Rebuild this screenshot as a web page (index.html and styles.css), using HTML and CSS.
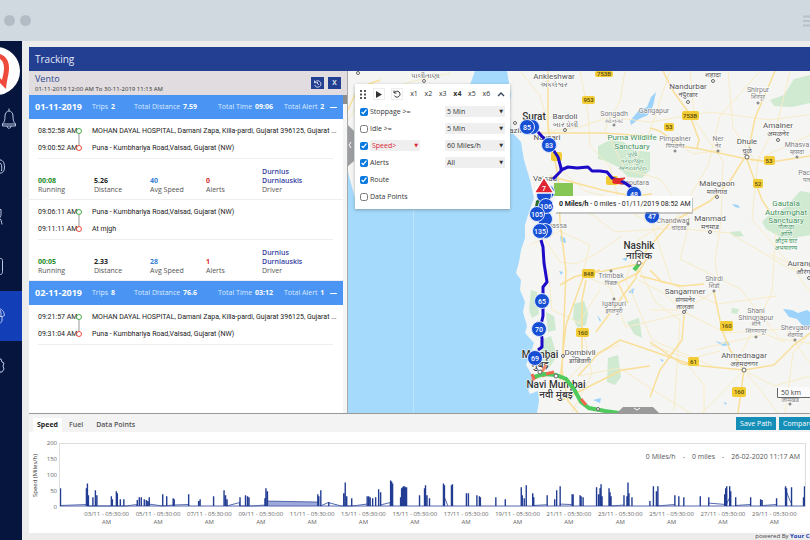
FILE: index.html
```html
<!DOCTYPE html>
<html lang="en">
<head>
<meta charset="utf-8">
<meta name="viewport" content="width=device-width, initial-scale=1">
<title>Tracking</title>
<link rel="stylesheet" href="styles.css">
</head>
<body>
<header class="browser-bar">
  <span class="dot"></span><span class="dot"></span>
  <svg class="menu-icon" width="7" height="12" viewBox="0 0 7 12" aria-hidden="true"><path d="M0 1.500h7M0 6h7M0 10.500h7"/></svg>
</header>
<div class="app">
  <nav class="sidebar" aria-label="Main">
    <a class="logo" href="#" aria-label="Home">
      <svg width="22" height="60" viewBox="0 0 22 60"><circle cx="-4" cy="30" r="24" fill="#fff"/><path d="M0 13C6 15 9 20 9 27c0 6-2 11-3 21L-2 40V35l4 4c1-5 2-8 2-12 0-5-2-8-4-9z" fill="#ef4b3c"/></svg>
    </a>
    <a class="nav-item" href="#" aria-label="Alerts"><svg viewBox="0 0 22 50"><path d="M2.500 33c2-2 2.500-4 2.500-8 0-3 2-5 4-5s4 2 4 5c0 4 .5 6 2.500 8zM9 20v-2.500M2.500 33v2h13v-2M7 35c0 3 4 3 4 0"/></svg></a>
    <a class="nav-item" href="#" aria-label="Vehicles"><svg viewBox="0 0 22 50"><path d="M-2 19C3 18 4.500 22 4.500 26c0 3-1 5-3 6h-3M0 22c2 1 2 4 1.500 8"/></svg></a>
    <a class="nav-item" href="#" aria-label="Drivers"><svg viewBox="0 0 22 50"><path d="M-2 18.500h3v5c0 2-1 3-2 4M-1 27c2 1 2.500 3 3 6.500"/></svg></a>
    <a class="nav-item" href="#" aria-label="Reports"><svg viewBox="0 0 22 50"><path d="M-2 17.500h2.500c1.500 0 2 1 2 2v11c0 2-1 3-2 3H-2"/></svg></a>
    <a class="nav-item active" href="#" aria-label="Tracking" aria-current="page"><svg viewBox="0 0 22 50"><path d="M-2 17.500c4 0 6 3 6.500 7l-2 1H-2M2 25v4c0 2-1 3-3 3M-1 18c2 1 2 4 2 7"/></svg></a>
    <a class="nav-item" href="#" aria-label="Settings"><svg viewBox="0 0 22 50"><path d="M-1 18h2l1 3 2 1-1 3 1 3-2 3-2 0-1 3"/></svg></a>
  </nav>
  <main class="content">
    <h1 class="title">Tracking</h1>
    <div class="workspace">
      <section class="trips">
        <div class="vehicle">
          <div>
            <h2>Vento</h2>
            <p>01-11-2019 12:00 AM To 30-11-2019 11:13 AM</p>
          </div>
          <button class="square" aria-label="History"><svg width="9" height="9" viewBox="0 0 12 12"><path d="M2 2v3h3M2.300 5A4.300 4.300 0 1 1 2.200 8M6 4v2.500l2 1"/></svg></button>
          <button class="square">X</button>
        </div>
        <div class="trip-scroll">
          <div class="trip-list">
            <div class="day"><strong>01-11-2019</strong><span>Trips <b>2</b></span><span>Total Distance <b>7.59</b></span><span>Total Time <b>09:06</b></span><span>Total Alert <b>2</b></span><button aria-label="Collapse 01-11-2019"></button></div>
            <article class="trip">
              <div class="stops">
                <div class="stop"><time>08:52:58 AM</time><i class="ring start"></i><span>MOHAN DAYAL HOSPITAL, Damani Zapa, Killa-pardi, Gujarat 396125, Gujarat ...</span></div>
                <div class="stop"><time>09:00:52 AM</time><i class="ring end"></i><span>Puna - Kumbhariya Road,Valsad, Gujarat (NW)</span></div>
              </div>
              <div class="stats">
                <div><b class="green">00:08</b>Running</div><div><b>5.26</b>Distance</div><div><b class="blue">40</b>Avg Speed</div><div><b class="red">0</b>Alerts</div><div><b class="navy">Durnius<br>Durniauskis</b>Driver</div>
              </div>
            </article>
            <article class="trip">
              <div class="stops">
                <div class="stop"><time>09:06:11 AM</time><i class="ring start"></i><span>Puna - Kumbhariya Road,Valsad, Gujarat (NW)</span></div>
                <div class="stop"><time>09:11:11 AM</time><i class="ring end"></i><span>At mjgh</span></div>
              </div>
              <div class="stats">
                <div><b class="green">00:05</b>Running</div><div><b>2.33</b>Distance</div><div><b class="blue">28</b>Avg Speed</div><div><b class="red">1</b>Alerts</div><div><b class="navy">Durnius<br>Durniauskis</b>Driver</div>
              </div>
            </article>
            <div class="day"><strong>02-11-2019</strong><span>Trips <b>8</b></span><span>Total Distance <b>76.6</b></span><span>Total Time <b>03:12</b></span><span>Total Alert <b>1</b></span><button aria-label="Collapse 02-11-2019"></button></div>
            <article class="trip">
              <div class="stops">
                <div class="stop"><time>09:21:57 AM</time><i class="ring start"></i><span>MOHAN DAYAL HOSPITAL, Damani Zapa, Killa-pardi, Gujarat 396125, Gujarat ...</span></div>
                <div class="stop"><time>09:31:04 AM</time><i class="ring end"></i><span>Puna - Kumbhariya Road,Valsad, Gujarat (NW)</span></div>
              </div>
            </article>
          </div>
          <div class="scrollbar"><span></span></div>
        </div>
      </section>
      <section class="map" aria-label="Map">
        <svg class="map-canvas" viewBox="348 71 462 342" preserveAspectRatio="xMinYMin slice">
          <rect x="348" y="71" width="1200" height="900" fill="#a5dafd"/>
          <path d="M348 71H475L468 90 440 140 400 150 356 202 348 172z" fill="#f5f5f4"/>
          <path d="M507 71L511 95 507 115 512 132 521 142 524 160 530 180 534 198 529 212 525 225 525 238 521 250 519 262 516 273 521 280 520 290 525 302 523 312 527 326 525 333 534 343 531 352 526 365 532 375 534 384 528 390 530 394 538 391 539 401 537 413V520H1500V71z" fill="#f5f5f4"/>
          <g class="forest">
            <path d="M598 146l12-6 14 2 8 8 18 2v18l-8 8-14-1-10-10-12-6-8-2z"/><path d="M770 100l14-5 10-16 16-4v28l-18 4-18-1z"/><path d="M762 222l8-8 10-3 8-6 12-14 12 2v42l-14 2-4 6-14-6-14-8z"/>
            <path d="M574 304l10-3 4 12-2 12-8 3-5-9z"/>
            <path d="M608 358l10-3 3 22-6 8-8-3z"/>
            <path d="M627 322l12-4 3 20-8-4z"/>
            <path d="M531 290l6 2 2 22-7 4-3-8zM541 340l10-4 6 20-8 12-8-4zM546 312l8 4 2 14-8 2zM730 232l10-1 4 5-10 1zM732 308l7 1-2 5-6-1z"/>
          </g>
          <g class="lake">
            <path d="M630 121l9-11 8-3 4-10 5-5-3 14-5 9-9 4-8 6z"/><path d="M783 309l9 1 6 3 9-3 3 2v16l-8-3-5-6-8-2z"/><path d="M715 341l7 2 6-2 2 4-7 1zM732 204l6 1 2 3-5-1zM560 236l5 2 1 5-5-1zM597 315l4 5-1 2zM559 271l4 1-2 3zM628 292l6-4-1 6zM622 259l6-2-2 4zM593 400l8-2-1 5zM660 359l4 1-2 2zM724 402l3 1-2 2zM609 116l2 5 2 1zM653 385l4 5z"/>
          </g>
          <path d="M413.500 209V413" stroke="#bce4fe" stroke-width="1"/>
          <g class="road-thin">
            <path d="M348 120l12-20 20-8 30-10 40-9M520 71l20 25 10 35 30-4 30-10 40 5 60-10 60 8 50-7M580 71l8 40 2 35 20 20 10 40 32 18 20 60 45 20 60-8M625 71l-5 30-15 28 20 40 35 10 30 40-10 40 60 30 40 50 65 10M690 71l5 50 28 40-2 60-6 40 5 30M760 71l-40 45-12 50-30 50-40 24-12 40 26 60 60 26M545 205l30-3 40 30 60-4 55 5 60 36 20-4M530 245l30-14 30 14-8 30 28 12 16 40 60-14 40 20 60-4 24 35M548 270l4 40 30 14 10 50-20 38M640 270l16 33 24 17-6 90M620 345l-30 10-30 35M688 365l16 20 0 28M744 370l30 16 36-10M744 370l34 43M744 370l-42 43M690 315l-30-24-22-11M714 292l-30 18-34 0M776 232l-4 60-30 60M790 71l-12 50-20 38-6 60 40 48M810 135l-60 28M753 158l-20-30-5-57M723 150l-30 4-30-20M650 345l40 14 30-8M810 292l-20-28-20-10M785 413l8-60 17-20M600 290l-22 34M555 165l30 26 40 10 35 28M540 232l20 30 16 2 20-10 26-18M695 350l70-16 20 8M670 71l-20 60-20 40M578 376l42-8 30 20 40 25"/>
          </g>
          <g class="road">
            <path d="M348 110l10-22 22-8M548 71v58l6 27 4 20 2 45 6 50-4 100 6 30 10 12M540 133h60l50 3M560 381l6-56 18-50 60-12M596 332l40-54 4-20 30-35 40-22 20-20 15-24"/><path d="M663 71l10 20 16 22 10 27-2 8M650 128l10 3 20 15 20 3 47 10 24 3 39-6M747 158l8-40 20-47M747 160l15 40 10 15M650 270l12 12 20 4 22-2M714 292l8 38 8 20 14 20-6 43M650 342l32 22 30 3 32 3 30-5 20-20 16-12M684 315l-2 25-22 30-10 27M578 376l20-22 22-14 70 24M582 350v-50l4-20M562 400l60-30 28-4M650 253l-12 20-20 10 10 20M640 276l40 10M550 176l22 6 30 8 30 6 20-2M600 270l-26 7-14 8"/>
          </g>
          <g class="shield">
            <g><rect x="595" y="71" width="18" height="6" rx="2"/><text x="604" y="76">753B</text></g>
            <g><rect x="582" y="96" width="13" height="8" rx="2"/><text x="588.500" y="102">953</text></g>
            <g><rect x="682" y="111" width="17" height="9" rx="2"/><text x="690" y="118">753B</text></g>
            <g><rect x="664" y="123" width="10" height="8" rx="2"/><text x="669" y="129">53</text></g>
            <g><rect x="764" y="156" width="11" height="9" rx="2"/><text x="769" y="163">53</text></g>
            <g><rect x="753" y="179" width="10" height="9" rx="2"/><text x="758" y="186">52</text></g>
            <g><rect x="582" y="269" width="13" height="9" rx="2"/><text x="588.500" y="276">848</text></g>
            <g><rect x="576" y="328" width="13" height="9" rx="2"/><text x="582.500" y="335">160</text></g>
            <g><rect x="720" y="321" width="13" height="10" rx="2"/><text x="726.500" y="328">160</text></g>
            <g><rect x="688" y="357" width="11" height="9" rx="2"/><text x="693.500" y="364">61</text></g>
            <g><rect x="732" y="387" width="14" height="10" rx="2"/><text x="739" y="394">160</text></g>
            <rect x="551" y="152" width="11" height="9" rx="2"/><rect x="606" y="176" width="12" height="9" rx="2"/>
          </g>
          <g class="place small">
            <text x="614" y="116">Songadh</text><text class="local" x="614" y="123">સોનગઢ</text><text x="654" y="113">Gangapur</text>
            <text x="758" y="92">Shirpur</text><text class="local" x="758" y="99">शिरपूर</text><text x="675" y="141">Pimpalner</text><text class="local" x="675" y="148">पिंपळनेर</text>
            <text x="718" y="141">Ner</text><text class="local" x="718" y="148">नेर</text><text x="797" y="147">Mhasva</text><text class="local" x="797" y="154">म्हसवा</text>
            <text x="811" y="175">Pachora</text><text class="local" x="810" y="182">पाचोरा</text><text x="635" y="185">Saputara</text><text x="673" y="223">Chandwad</text><text class="local" x="679" y="230">चांदवड</text>
            <text x="611" y="278">Trimbak</text><text class="local" x="611" y="285">त्रिंबक</text><text x="614" y="306">Igatpuri</text><text class="local" x="614" y="313">इगतपुरी</text>
            <text x="714" y="281">Shirdi</text><text class="local" x="714" y="288">शिर्डी</text><text x="756" y="313">Shani</text><text x="756" y="320">Shingnapur</text><text class="local" x="756" y="326">शनि</text><text class="local" x="756" y="333">शिंगणापूर</text>
            <text x="796" y="330">Shevgaon</text><text class="local" x="795" y="337">शेवगाव</text><text x="554" y="228">Silvassa</text><text class="local" x="790" y="402">जामखेड</text>
          </g>
          <g class="place">
            <text x="554" y="79">Ankleshwar</text><text class="local" x="554" y="87">અંકલેશ્વર</text><text x="565" y="119">Bardoli</text><text class="local" x="565" y="127">બારડોલી</text>
            <text x="688" y="89">Nandurbar</text><text class="local" x="688" y="97">नंदुरबार</text><text class="local" x="713" y="77">शहादा</text><text x="778" y="128">Amalner</text><text class="local" x="778" y="136">अमळनेर</text>
            <text x="747" y="144">Dhule</text><text class="local" x="747" y="153">धुळे</text><text x="717" y="186">Malegaon</text><text class="local" x="717" y="194">मालेगाव</text>
            <text x="710" y="221">Manmad</text><text class="local" x="710" y="229">मनमाड</text><text x="547" y="140">Navsari</text><text x="545" y="181">Valsad</text><text x="515" y="133">Hazira</text>
            <text x="580" y="355">Dombivli</text><text class="local" x="580" y="363">डोंबिवली</text><text x="685" y="294">Sangamner</text><text class="local" x="685" y="302">संगमनेर</text><text class="local" x="685" y="309">तालुका</text>
            <text x="744" y="358">Ahmednagar</text><text class="local" x="744" y="366">अहमदनगर</text><text x="809" y="266">Aurangabad</text><text class="local" x="809" y="274">औरंगाबाद</text><text class="local" x="425" y="78">પાલીતાણા</text>
          </g>
          <g class="place park">
            <text x="632" y="140">Purna Wildlife</text><text x="632" y="149">Sanctuary</text><text class="sub" x="632" y="156">પુર્ણા</text><text class="sub" x="632" y="163">વન્યજીવ</text><text class="sub" x="632" y="170">અભયારણ્ય</text>
            <text x="786" y="206">Gautala</text><text x="786" y="215">Autramghat</text><text x="786" y="223">Sanctuary</text><text class="sub" x="786" y="229">गौताळा</text><text class="sub" x="786" y="236">आणि</text><text class="sub" x="786" y="243">औट्रम घाट</text><text class="sub" x="786" y="250">अभयारण्य</text>
          </g>
          <g class="place city">
            <text x="534" y="120">Surat</text><text x="639" y="249">Nashik</text><text x="639" y="259">नाशिक</text><text x="540" y="358">Mumbai</text><text x="540" y="368">मुंबई</text><text x="556" y="388">Navi Mumbai</text><text x="556" y="398">नवी मुंबई</text>
          </g>
          <g class="town"><circle cx="358" cy="73" r="1.500"/><circle cx="424" cy="81" r="1.500"/><circle cx="515" cy="123" r="1.500"/><circle cx="565" cy="130" r="1.500"/><circle cx="614" cy="125" r="1"/><circle cx="713" cy="81" r="1.500"/><circle cx="688" cy="102" r="1.500"/><circle cx="758" cy="103" r="1"/><circle cx="675" cy="151" r="1"/><circle cx="718" cy="151" r="1"/><circle cx="778" cy="140" r="1.500"/><circle cx="747" cy="157" r="2"/><circle cx="797" cy="157" r="1"/><circle cx="717" cy="197" r="1.500"/><circle cx="710" cy="232" r="1.500"/><circle cx="688" cy="224" r="1"/><circle cx="611" cy="271" r="1"/><circle cx="614" cy="299" r="1"/><circle cx="714" cy="291" r="1"/><circle cx="684" cy="312" r="1.500"/><circle cx="756" cy="337" r="1"/><circle cx="795" cy="340" r="1"/><circle cx="744" cy="370" r="2"/><circle cx="563" cy="356" r="1.500"/><circle cx="790" cy="404" r="1"/><circle cx="809" cy="278" r="1.500"/></g>
          <path d="M532 380l8-5 6-10M542 376l8-3" fill="none" stroke="#f08a6a" stroke-width="3"/>
          <path d="M534 377l10-3 12 1 10 4 8 10 7 13 8 6 16 3 14 2M634 270l5-6" fill="none" stroke="#4fc95c" stroke-width="4"/>
          <path d="M546 374l8-2M581 399l5 6M532 374l2 5" fill="none" stroke="#ee6a4f" stroke-width="3"/>
          <g class="town"><circle cx="556" cy="376" r="2"/><circle cx="540" cy="372" r="2"/><circle cx="598" cy="409" r="1.500"/><circle cx="639" cy="263" r="2"/></g>
          <path class="route" d="M532 128l6 4 12 13 8 12 3 11 0 3-8 8M561 170l7-3 9 1 11-1 4 4 8 0 7 1 5 6 13 5 7 5M541 240l2 7 1 16 3 19-4 5v29l-3 13 2 9v9l-4 3"/>
          <path d="M613 179l12-1-6 4 3 2-9-1zM618 182l5 2" fill="#e12b2b" stroke="#e12b2b"/>
          <rect x="554" y="183" width="19" height="13" fill="#85c655"/><path d="M536 201l4-3v10l-5-1z" fill="#286b2c"/>
          <g class="marker">
            <circle cx="532" cy="127" r="7.500"/><circle cx="527" cy="127" r="7.500"/><text x="527" y="129.500">85</text>
            <circle cx="549" cy="145" r="7.500"/><text x="549" y="147.500">83</text>
            <circle cx="634" cy="194" r="7.500"/><text x="634" y="196.500">48</text>
            <circle cx="652" cy="216" r="7.500"/><text x="652" y="218.500">47</text>
            <circle cx="547" cy="192" r="7.500"/><circle cx="544" cy="195" r="7.500"/><circle cx="545" cy="219" r="7.500"/><circle cx="546" cy="206" r="7.500"/><text x="546" y="208.500">106</text>
            <circle cx="537" cy="214" r="7.500"/><text x="537" y="216.500">105</text>
            <circle cx="545" cy="231" r="7.500"/><circle cx="540" cy="231" r="7.500"/><text x="540" y="233.500">135</text>
            <circle cx="542" cy="301" r="7.500"/><text x="542" y="303.500">65</text><circle cx="539" cy="329" r="7.500"/><text x="539" y="331.500">70</text><circle cx="535" cy="358" r="7.500"/><text x="535" y="360.500">69</text>
          </g>
          <path d="M544 177l10 16h-20z" fill="#df2632" stroke="#fff" stroke-width="1.500" stroke-linejoin="round"/><text x="544" y="191" class="alert-count">7</text>
          <rect x="556" y="198" width="137" height="16" fill="#999" opacity=".5"/><path d="M552 204l3-3v6z" fill="#fff"/><rect x="555" y="196" width="137" height="16" rx="1" fill="#fff"/>
          <text x="559" y="206" class="tip"><tspan class="tip-strong">0 Miles/h</tspan> - 0 miles - 01/11/2019 08:52 AM</text>
          <rect x="777" y="387" width="60" height="11" fill="#fff" opacity=".6"/><path d="M777.500 388v9.500H840" fill="none" stroke="#666"/><text x="781" y="395" class="scale">50 km</text>
          <path d="M347 124l7 7v30l-7 6z" fill="#9b9da0"/><path d="M351 142l-2 3 2 3" fill="none" stroke="#fff"/>
          <path d="M617 413l6-6h30l6 6z" fill="#9a9a9a"/><path d="M634 408l3 2 3-2" fill="none" stroke="#fff"/>
        </svg>
        <form class="playback">
          <div class="toolbar">
            <svg class="grip" width="6" height="9" viewBox="0 0 6 9" aria-hidden="true"><path d="M0 0h2v2H0zM4 0h2v2H4zM0 3.500h2v2H0zM4 3.500h2v2H4zM0 7h2v2H0zM4 7h2v2H4z"/></svg>
            <button type="button" class="boxed" aria-label="Play"><svg width="6" height="7" viewBox="0 0 6 7"><path d="M0 0l6 3.500L0 7z" fill="#333"/></svg></button>
            <button type="button" class="boxed" aria-label="Restart"><svg width="8" height="8" viewBox="0 0 8 8"><path d="M1 .5v2.500h2.500M1.500 2.500a3 3 0 1 1-.2 3" fill="none" stroke="#333"/></svg></button>
            <button type="button">x1</button><button type="button">x2</button><button type="button">x3</button><button type="button" class="on">x4</button><button type="button">x5</button><button type="button">x6</button>
            <button type="button" aria-label="Collapse"><svg width="8" height="5" viewBox="0 0 8 5"><path d="M1 4l3-3 3 3" fill="none" stroke="#36445c" stroke-width="1.400"/></svg></button>
          </div>
          <div class="option"><label><input type="checkbox" checked>Stoppage &gt;=</label><span class="pick"><select aria-label="Stoppage minutes"><option>5 Min</option></select></span></div>
          <div class="option"><label><input type="checkbox">Idle &gt;=</label><span class="pick"><select aria-label="Idle minutes"><option>5 Min</option></select></span></div>
          <div class="option"><div class="speed-field"><input type="checkbox" checked aria-label="Speed"><span class="pick danger"><select aria-label="Speed comparison"><option>Speed&gt;</option></select></span></div><span class="pick"><select aria-label="Speed limit"><option>60 Miles/h</option></select></span></div>
          <div class="option"><label><input type="checkbox" checked>Alerts</label><span class="pick"><select aria-label="Alert type"><option>All</option></select></span></div>
          <div class="option"><label><input type="checkbox" checked>Route</label></div>
          <div class="option"><label><input type="checkbox">Data Points</label></div>
        </form>
      </section>
    </div>
    <section class="graph">
      <div class="tabs">
        <button class="tab active">Speed</button><button class="tab">Fuel</button><button class="tab">Data Points</button>
        <div class="actions"><button>Save Path</button><button>Compare</button></div>
      </div>
      <div class="chart">
        <span class="axis-title">Speed (Miles/h)</span>
        <div class="y-axis"><span>200</span><span>150</span><span>100</span><span>50</span><span>0</span></div>
        <div class="plot">
          <svg viewBox="59 443 747 64" preserveAspectRatio="none" aria-label="Speed over time">
            <path d="M267 506V501l50 1v4z" fill="#9da9da"/>
            <path d="M59 505.500L86 504.500V506h39l11-1.500V506M148 504l14 2 11-1 15-.5V506M226 506l13-3.500V506h12l14-1M267 501l50 1M320 506l8-3.500 13 3.500h11l15-2M380 505l10-2.500V506M444 496l4 10M534 505.500l13-.8M560 504l12 .5M612 506l12-1M657 506l18-1.500M709 503l18 1.500 4-8M736 505.500l15-1M764 505.500l13-1M786 488l6 15M59 506H806" class="trace"/>
            <path class="spikes" d="M59.500 506V488M86.500 506V483M85.500 506V488M87.500 506V495M92 506V497M94.500 506V490M96 506V495M110.500 506V496M111.500 506V499M115.500 506V491M116.500 506V493M119.500 506V499M123 506V499M136.500 506V500M138.500 506V497M140.500 506V497M143.500 506V499M145.500 506V500M147 506V501M148.500 506V497M162 506V494M166 506V496M172.500 506V498M173.500 506V499M188 506V494M198 506V501M199.500 506V499M213 506V496M223.500 506V490M225 506V495M226.500 506V499M239.500 506V497M245 506V495M247 506V496M248.500 506V497M264.500 506V498M265.500 506V488M267 506V491M317.500 506V494M318.500 506V496M320.500 506V490M328.500 506V502M343.500 506V493M345 506V482M346.500 506V496M351.500 506V498M367 506V496M368.500 506V496M370 506V497M372.500 506V498M375.500 506V497M378.500 506V489M380.500 506V492M390.500 506V480M391.500 506V481M392.500 506V483M400.500 506V497M401.500 506V488M402.500 506V487M403.500 506V486M404.500 506V486M405.500 506V487M406.500 506V487M419.500 506V495M424.500 506V488M425.500 506V485M427 506V495M429.500 506V498M443.500 506V483M444.500 506V485M451.500 506V485M452.500 506V484M466.500 506V493M468.500 506V493M477 506V495M479.500 506V496M480.500 506V497M496 506V497M505.500 506V499M521.500 506V487M522.500 506V495M524.500 506V498M526.500 506V485M533 506V493M534 506V497M547.500 506V495M555 506V499M557 506V490M560.500 506V486M572.500 506V494M573.500 506V494M580.500 506V495M581.500 506V496M583.500 506V497M597 506V487M599 506V494M600.500 506V488M601.500 506V484M602.500 506V496M609.500 506V488M610.500 506V492M611.500 506V496M624.500 506V495M627.500 506V496M628.500 506V482M629.500 506V493M632.500 506V497M650.500 506V501M654 506V486M657 506V491M658.500 506V486M675.500 506V495M679.500 506V496M684.500 506V497M701 506V496M709.500 506V497M725.500 506V494M726.500 506V488M727.500 506V486M730.500 506V486M731.500 506V491M736.500 506V497M751.500 506V497M761.500 506V499M763 506V500M777.500 506V498M786.500 506V486M787.500 506V488M792.500 506V487M804.500 506V497M805.500 506V486"/>
          </svg>
          <p class="readout"><span>0 Miles/h</span><span>-</span><span>0 miles</span><span>-</span><span>26-02-2020 11:17 AM</span></p>
        </div>
        <div class="x-axis">
          <span>03/11 - 05:30:00 AM</span><span>05/11 - 05:30:00 AM</span><span>07/11 - 05:30:00 AM</span><span>09/11 - 05:30:00 AM</span><span>11/11 - 05:30:00 AM</span><span>13/11 - 05:30:00 AM</span><span>15/11 - 05:30:00 AM</span><span>17/11 - 05:30:00 AM</span><span>19/11 - 05:30:00 AM</span><span>21/11 - 05:30:00 AM</span><span>23/11 - 05:30:00 AM</span><span>25/11 - 05:30:00 AM</span><span>27/11 - 05:30:00 AM</span><span>29/11 - 05:30:00 AM</span>
        </div>
      </div>
    </section>
    <footer>powered By <a href="#">Your Company</a></footer>
  </main>
</div>
</body>
</html>
```
FILE: styles.css
```css
* { box-sizing: border-box; }
body { margin: 0; min-height: 100vh; display: flex; flex-direction: column; overflow-x: hidden; font: 7px/10px "Open Sans", "Noto Sans", sans-serif; color: #333; background: #ececec; }
h1, h2, p { margin: 0; font-weight: 400; }
button, select { font: inherit; color: inherit; border: 0; padding: 0; background: none; }
a { color: inherit; text-decoration: none; }

.browser-bar { height: 41px; flex: none; display: flex; align-items: center; gap: 5px; padding-left: 4px; background: #d0d8e0; }
.dot { width: 11px; height: 11px; border-radius: 50%; background: #b3bbc5; }
.menu-icon { margin-left: auto; fill: none; stroke: #b8c0c9; stroke-width: 2; }

.app { flex: 1; display: flex; min-width: 0; }
.sidebar { width: 22px; flex: none; background: #06153d; overflow: hidden; }
.logo, .nav-item { display: block; height: 50px; }
.nav-item svg { display: block; width: 22px; height: 50px; fill: none; stroke: #bcc7e5; }
.nav-item.active { background: #123eb8; }

.content { flex: 1; min-width: 0; display: flex; flex-direction: column; padding: 6px 0 0 7px; overflow: hidden; }
.title { height: 24px; flex: none; padding-left: 6px; background: #223f92; color: #e4e9f6; font-size: 10px; line-height: 24px; }
.workspace { flex: 1; min-height: 342px; display: flex; }
.trips { width: 319px; flex: none; display: flex; flex-direction: column; background: #fff; border-right: 1px solid #a9a9a9; }
.vehicle { height: 24px; display: flex; align-items: center; gap: 4px; padding: 0 6px; background: #e0dcdf; }
.vehicle > div { flex: 1; }
.vehicle h2 { font-size: 9px; line-height: 12px; color: #2c4a92; }
.vehicle p { font-size: 6px; line-height: 9px; }
.square { width: 13px; height: 12px; display: grid; place-items: center; background: #223f92; color: #fff; font-weight: 600; }
.square svg { fill: none; stroke: #fff; }
.trip-scroll { flex: 1; display: flex; }
.trip-list { flex: 1; min-width: 0; }
.scrollbar { width: 4px; background: #f5f5f5; }
.scrollbar span { display: block; height: 9px; background: #8d8d8d; }

.day { height: 24px; display: grid; grid-template-columns: 57px 42px 84px 66px 46px 1fr; align-items: center; padding-left: 6px; background: #4a94f3; color: #dceaff; white-space: nowrap; }
.day strong { font-size: 9px; color: #fff; }
.day b { color: #fff; margin-left: 1px; }
.day button { width: 7px; height: 1px; background: #fff; }

.trip { border-bottom: 1px solid #eee; }
.trip:last-child { border: 0; }
.stops { margin: 0 10px 0 9px; padding: 3px 0 2px; border-bottom: 1px solid #eee; }
.stop { height: 17px; display: grid; grid-template-columns: 38px 6px 1fr; align-items: center; font-family: Roboto, "Open Sans", sans-serif; white-space: nowrap; color: #222; }
.stop > span { padding-left: 10px; }
.ring { position: relative; width: 6px; height: 6px; border: 1px solid #48aa49; border-radius: 50%; background: #fff; }
.ring.end { border-color: #ef4b3c; }
.ring.start::after { content: ""; position: absolute; left: 1px; top: 5px; width: 2px; height: 11px; background: #ccc; }
.stats { height: 40px; display: grid; grid-template-columns: repeat(5, 56px); align-items: end; padding: 0 0 5px 9px; line-height: 9px; color: #555; }
.stats b { display: block; color: #222; }
.stats .green { color: #218a25; }
.stats .blue { color: #3580d5; }
.stats .red { color: #dc2430; }
.stats .navy { color: #3440a0; font-weight: 600; }

.map { position: relative; flex: 1; min-width: 0; overflow: hidden; background: #f5f5f4; }
.map-canvas { position: absolute; inset: 0; width: 100%; height: 100%; font-family: Roboto, "Noto Sans", sans-serif; }
.forest { fill: #cfead1; }
.lake { fill: #9dd3fa; }
.road, .road-thin { fill: none; stroke: #f9df98; stroke-width: 1.5; stroke-linejoin: round; }
.road-thin { stroke: #f8ecc6; stroke-width: 1; }
.shield rect { fill: #f1cc35; }
.shield text { font-size: 6px; font-weight: 500; text-anchor: middle; fill: #56480e; }
.place { font-size: 8px; text-anchor: middle; fill: #555; stroke: #fff; stroke-width: 1px; paint-order: stroke; }
.place .local { font-size: 7px; }
.place.small { font-size: 7px; fill: #7c7c7c; }
.place.small .local, .place .sub { font-size: 6px; }
.place.park { fill: #3c9158; }
.place.city { font-size: 10px; font-weight: 500; fill: #333; }
.town { fill: #fff; stroke: #666; }
.route { fill: none; stroke: #1d0bc8; stroke-width: 3; stroke-linejoin: round; }
.marker circle { fill: #174fd4; stroke: #dbe6ff; stroke-width: 1px; }
.marker text, .alert-count { font-size: 7px; font-weight: 500; fill: #fff; text-anchor: middle; }
.tip { font-size: 7px; fill: #222; }
.tip-strong { font-weight: 700; }
.scale { font: 7px "Open Sans", sans-serif; fill: #444; }

.playback { position: absolute; left: 7px; top: 13px; width: 155px; padding: 1px 5px 4px; background: #fff; box-shadow: 0 1px 3px #6779; }
.toolbar { height: 18px; display: flex; align-items: center; justify-content: space-between; }
.toolbar button { display: grid; place-items: center; }
.toolbar .boxed { width: 12px; height: 12px; border: 1px solid #eee; }
.toolbar .on { font-weight: 700; }
.grip { fill: #555; }
.option { height: 17px; display: flex; align-items: center; justify-content: space-between; }
.option label, .speed-field { display: flex; align-items: center; gap: 2px; }
.option input { width: 8px; height: 8px; margin: 0; accent-color: #0879df; }
.pick { position: relative; width: 60px; height: 11px; background: #efefef; }
.pick select { appearance: none; width: 100%; height: 11px; padding-left: 2px; display: block; }
.pick::after { content: "▼"; position: absolute; right: 2px; top: 0; font: 5px/11px "DejaVu Sans", sans-serif; pointer-events: none; }
.danger { width: 50px; color: #dc2430; }

.graph { flex: none; border-top: 1px solid #999; background: #fff; }
.tabs { height: 18px; display: flex; align-items: flex-end; padding-left: 4px; background: #f3f3f3; }
.tab { height: 14px; padding: 0 6px; margin-right: 1px; font-weight: 600; color: #555; }
.tab.active { padding: 0 4px; background: #fff; color: #222; font-weight: 700; }
.actions { display: flex; gap: 3px; margin: 0 -7px 2px auto; }
.actions button { height: 13px; padding: 0 4px; background: #158fb8; color: #fff; white-space: nowrap; }
.chart { display: grid; grid-template-columns: 15px 11px 1fr; grid-template-rows: 64px 26px; column-gap: 2px; padding: 11px 4px 0 0; font-size: 6px; color: #666; }
.axis-title { writing-mode: vertical-rl; transform: rotate(180deg); text-align: center; line-height: 12px; white-space: nowrap; color: #333; }
.y-axis { display: flex; flex-direction: column; justify-content: space-between; margin: -4px 0; line-height: 8px; text-align: right; }
.plot { position: relative; border-top: 1px solid #ddd; border-left: 1px solid #ddd; border-right: 1px solid #ddd; }
.plot svg { display: block; width: 100%; height: 63px; }
.trace { fill: none; stroke: #5266ad; }
.spikes { fill: none; stroke: #223c93; stroke-width: 1.4; }
.readout { position: absolute; right: 5px; top: 8px; display: flex; gap: 7px; font-size: 7px; color: #555; }
.x-axis { grid-column: 3; display: grid; grid-template-columns: repeat(14, 1fr); padding: 3px 6px 0 22px; line-height: 8px; text-align: center; }
.x-axis span { padding: 0 3px; }
footer { height: 7px; flex: none; margin-right: -24px; text-align: right; font-size: 6px; line-height: 7px; white-space: nowrap; color: #444; }
footer a { color: #223fb0; font-weight: 700; }
```
